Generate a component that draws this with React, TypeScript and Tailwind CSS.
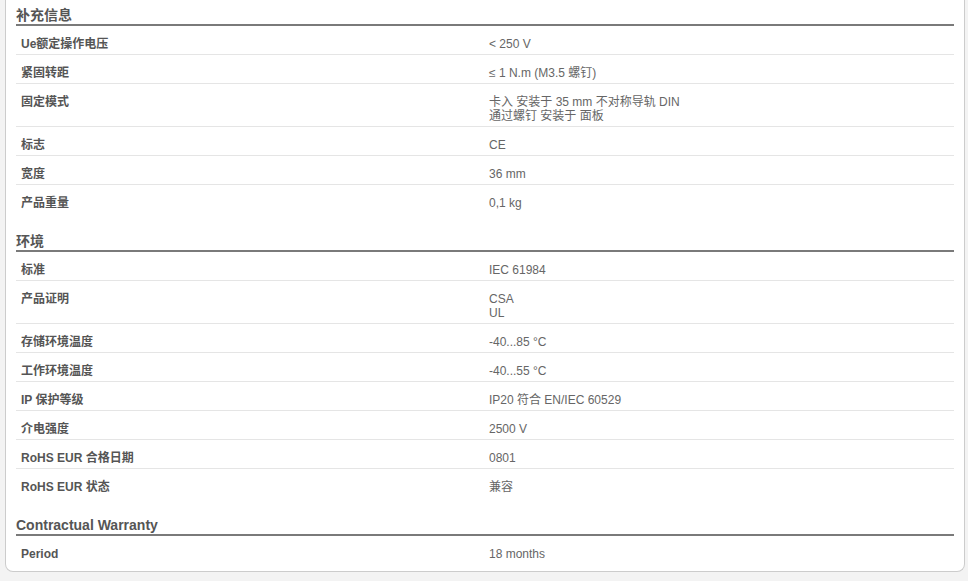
import React from 'react';

type Row = { label: string; value: string[] };
type Section = { title: string; rows: Row[] };

const sections: Section[] = [
  {
    title: '补充信息',
    rows: [
      { label: 'Ue额定操作电压', value: ['< 250 V'] },
      { label: '紧固转距', value: ['≤ 1 N.m (M3.5 螺钉)'] },
      { label: '固定模式', value: ['卡入 安装于 35 mm 不对称导轨 DIN', '通过螺钉 安装于 面板'] },
      { label: '标志', value: ['CE'] },
      { label: '宽度', value: ['36 mm'] },
      { label: '产品重量', value: ['0,1 kg'] },
    ],
  },
  {
    title: '环境',
    rows: [
      { label: '标准', value: ['IEC 61984'] },
      { label: '产品证明', value: ['CSA', 'UL'] },
      { label: '存储环境温度', value: ['-40...85 °C'] },
      { label: '工作环境温度', value: ['-40...55 °C'] },
      { label: 'IP 保护等级', value: ['IP20 符合 EN/IEC 60529'] },
      { label: '介电强度', value: ['2500 V'] },
      { label: 'RoHS EUR 合格日期', value: ['0801'] },
      { label: 'RoHS EUR 状态', value: ['兼容'] },
    ],
  },
  {
    title: 'Contractual Warranty',
    rows: [{ label: 'Period', value: ['18 months'] }],
  },
];

function SpecSection({ section, first }: { section: Section; first: boolean }) {
  return (
    <div className={first ? '' : 'mt-[20px]'}>
      <h3 className="text-[14px] font-bold leading-[17px] text-[#555] border-b-2 border-[#7a7a7a]">
        {section.title}
      </h3>
      {section.rows.map((row, i) => (
        <div
          key={row.label}
          className={`grid grid-cols-2 pt-[11px] pb-[3px] leading-[14px] text-[12px] ${
            i < section.rows.length - 1 ? 'border-b border-[#e5e5e5]' : ''
          }`}
        >
          <div className="pl-[5px] font-bold text-[#555]">{row.label}</div>
          <div className="pl-[4px] text-[#666]">
            {row.value.map((v) => (
              <div key={v}>{v}</div>
            ))}
          </div>
        </div>
      ))}
    </div>
  );
}

export default function App() {
  return (
    <div
      className="min-h-[581px] bg-[#f3f3f3] pl-[5px] pr-[3px] pb-[9px]"
      style={{ fontFamily: '"Liberation Sans", Arial, "Noto Sans CJK SC", sans-serif' }}
    >
      <div className="bg-white border border-t-0 border-[#cccccc] rounded-b-[8px] px-[10px] pt-[7px] pb-[7px]">
        {sections.map((s, i) => (
          <SpecSection key={s.title} section={s} first={i === 0} />
        ))}
      </div>
    </div>
  );
}
